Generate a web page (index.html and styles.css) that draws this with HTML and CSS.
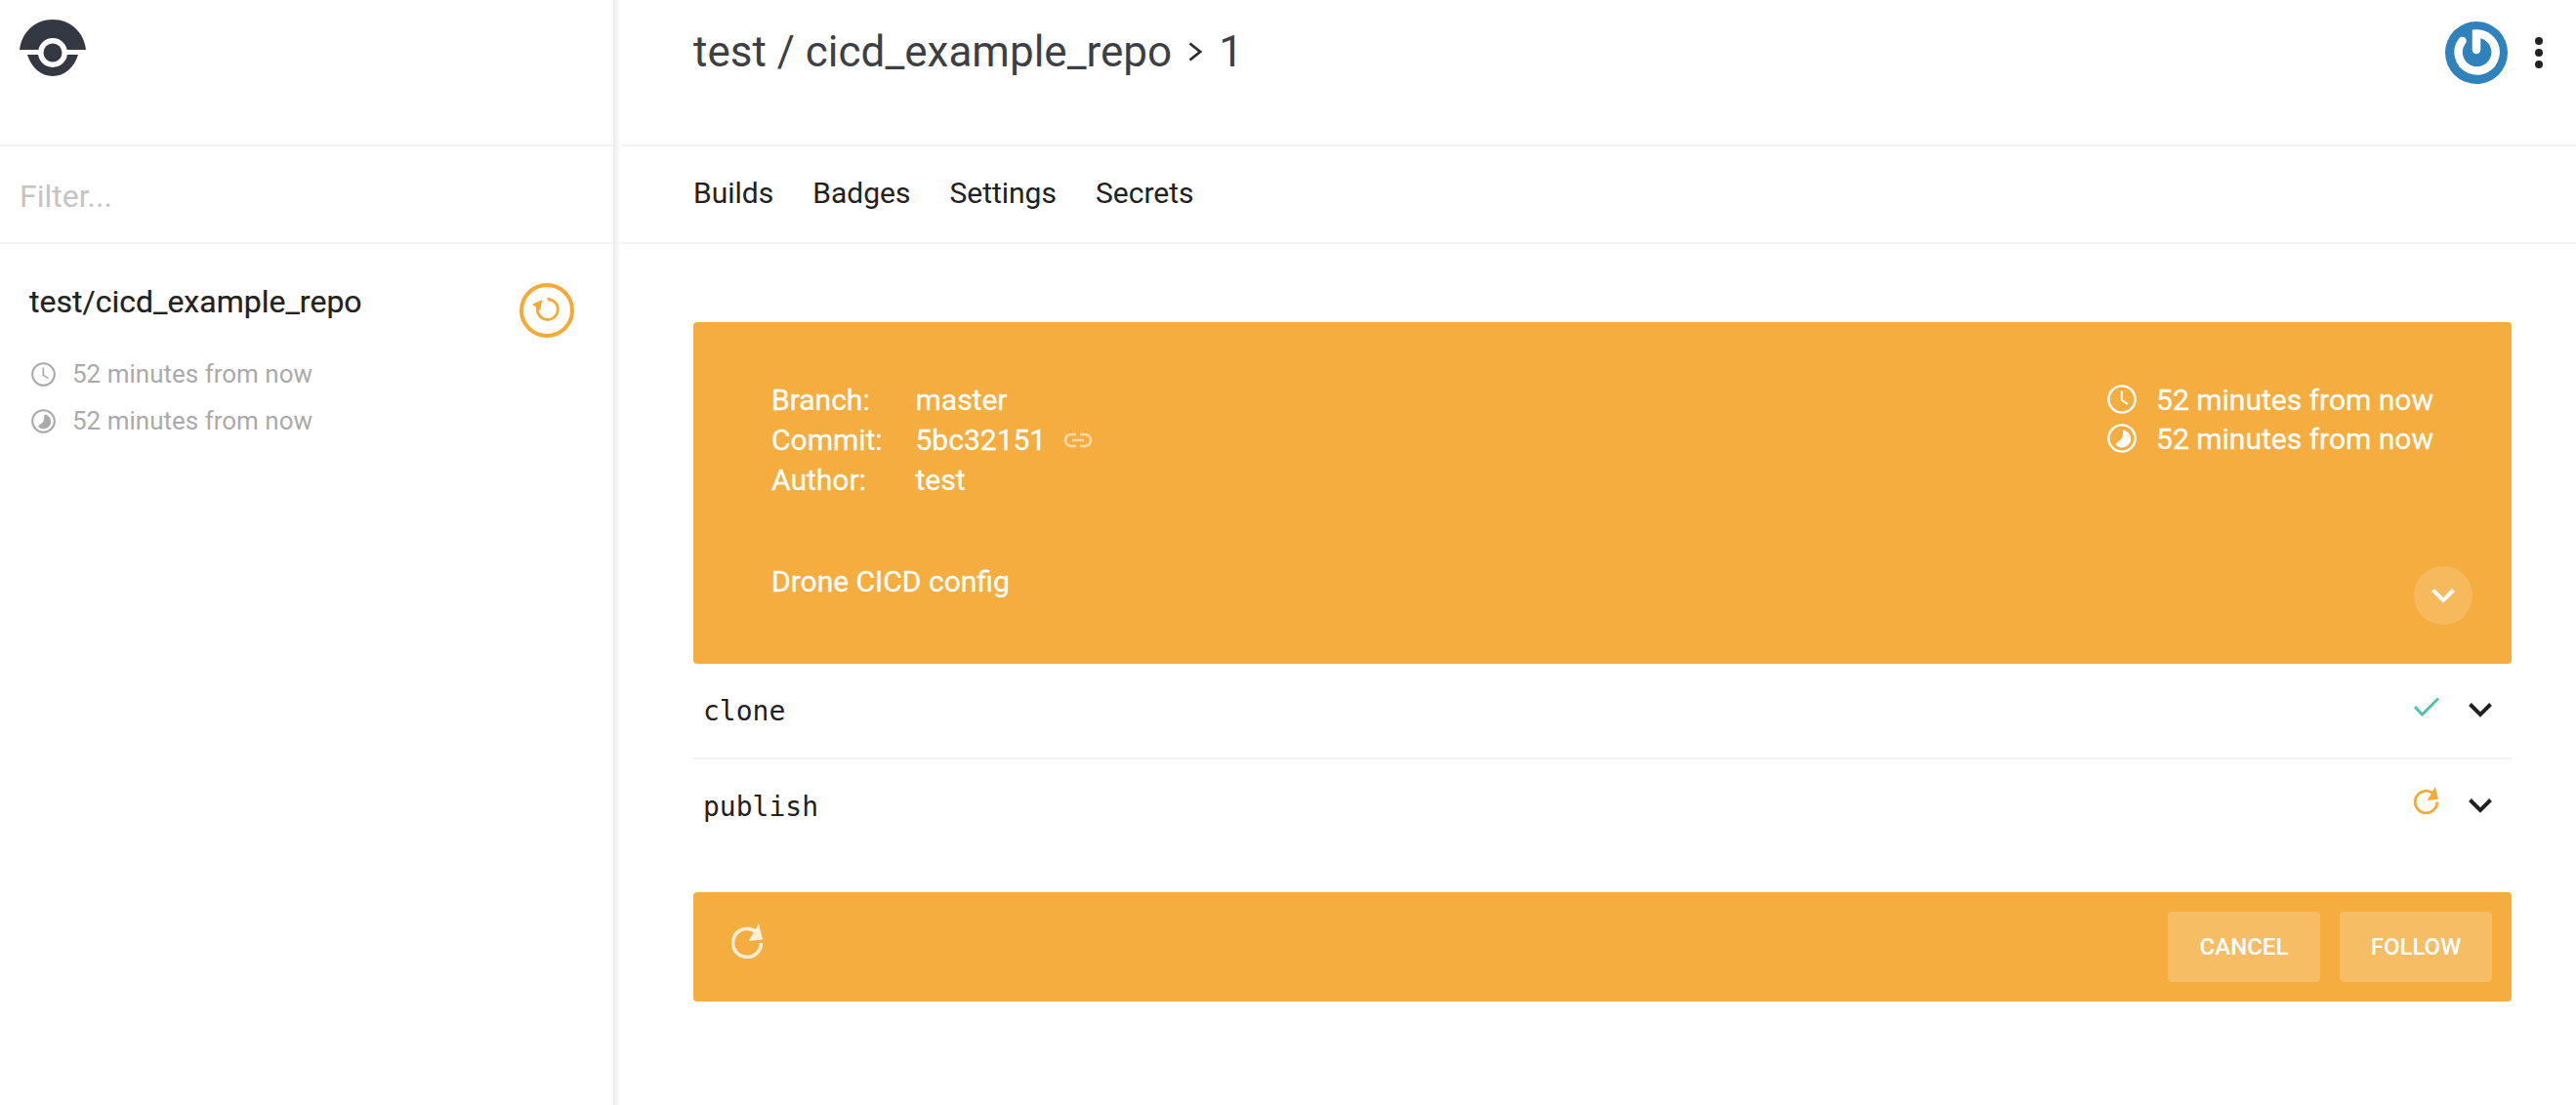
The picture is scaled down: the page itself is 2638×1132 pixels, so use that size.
FILE: index.html
```html
<!DOCTYPE html>
<html lang="en">
<head>
<meta charset="utf-8">
<title>test / cicd_example_repo</title>
<link rel="stylesheet" href="styles.css">
</head>
<body>
<svg class="defs" width="0" height="0" aria-hidden="true">
  <symbol id="refresh" viewBox="0 0 32 36">
    <path d="M30.5 20A14.5 14.5 0 1 1 25 8.6" fill="none" stroke="currentColor" stroke-width="3.6"/>
    <path d="M28 0L32 16.5L17.5 18Z" fill="currentColor"/>
  </symbol>
  <symbol id="clock" viewBox="0 0 30 30">
    <circle cx="15" cy="15" r="13.6" fill="none" stroke="currentColor" stroke-width="2.4"/>
    <path d="M14.8 6.5V16L21 20" fill="none" stroke="currentColor" stroke-width="2"/>
  </symbol>
  <symbol id="elapsed" viewBox="0 0 30 30">
    <circle cx="15" cy="15" r="13.6" fill="none" stroke="currentColor" stroke-width="2.4"/>
    <path d="M16 6.5A9 9 0 1 1 8.5 21.5L11 18.5Q16.5 17 16 6.5Z" fill="currentColor"/>
  </symbol>
  <symbol id="chevron" viewBox="0 0 24 16">
    <path d="M1.5 2.5L12 13L22.5 2.5" fill="none" stroke="currentColor" stroke-width="4"/>
  </symbol>
</svg>

<aside class="sidebar">
  <div class="brand">
    <svg class="logo" viewBox="0 0 68 58" aria-label="Drone">
      <path d="M0 31C2 13 16 0 34 0S66 13 68 31Z" fill="#343843"/>
      <path d="M8 36H60C56 49 46 58 34 58S12 49 8 36Z" fill="#343843"/>
      <circle cx="34" cy="34" r="15" fill="#fff"/>
      <circle cx="34" cy="34" r="9.5" fill="#343843"/>
    </svg>
  </div>
  <div class="filter">Filter...</div>
  <div class="repo">
    <div class="repo-text">
      <div class="repo-name">test/cicd_example_repo</div>
      <div class="repo-time"><svg class="repo-time-icon"><use href="#clock"/></svg><span>52 minutes from now</span></div>
      <div class="repo-time"><svg class="repo-time-icon"><use href="#elapsed"/></svg><span>52 minutes from now</span></div>
    </div>
    <svg class="repo-status" viewBox="0 0 56 56">
      <circle cx="28" cy="28" r="26" fill="none" stroke="#f6a935" stroke-width="4"/>
      <path d="M28.5 16.5A10.5 10.5 0 1 1 18.5 25" fill="none" stroke="#f6a935" stroke-width="2.8"/>
      <path d="M13 21.7L23 17.3L21.3 28.3Z" fill="#f6a935"/>
    </svg>
  </div>
</aside>

<main class="content">
  <header class="topbar">
    <h1 class="title">
      <span>test / cicd_example_repo</span>
      <svg class="title-sep" viewBox="0 0 14 20"><path d="M1.5 1.5L12 10L1.5 18.5" fill="none" stroke="#2a2d31" stroke-width="2.8"/></svg>
      <span>1</span>
    </h1>
    <div class="account">
      <svg class="avatar" viewBox="0 0 64 64">
        <circle cx="32" cy="32" r="32" fill="#3082bc"/>
        <path d="M17.5 20A19 19 0 1 0 32 12.5V29" fill="none" stroke="#fff" stroke-width="8.5" stroke-linecap="round"/>
      </svg>
      <div class="dots"><i></i><i></i><i></i></div>
    </div>
  </header>
  <nav class="tabs">
    <a>Builds</a><a>Badges</a><a>Settings</a><a>Secrets</a>
  </nav>
  <section class="page">
    <div class="card">
      <div class="card-top">
        <dl class="meta">
          <dt>Branch:</dt><dd>master</dd>
          <dt>Commit:</dt><dd>5bc32151<svg class="link" viewBox="0 0 30 16"><path d="M13 2H8a6 6 0 0 0 0 12H13M17 2H22a6 6 0 0 1 0 12H17M9 8H21" fill="none" stroke="#fff" stroke-width="2.5"/></svg></dd>
          <dt>Author:</dt><dd>test</dd>
        </dl>
        <div class="times">
          <div class="time"><svg class="time-icon"><use href="#clock"/></svg><span>52 minutes from now</span></div>
          <div class="time"><svg class="time-icon"><use href="#elapsed"/></svg><span>52 minutes from now</span></div>
        </div>
      </div>
      <div class="message">Drone CICD config</div>
      <div class="expand"><svg class="expand-icon"><use href="#chevron"/></svg></div>
    </div>
    <div class="steps">
      <div class="step">
        <span class="step-name">clone</span>
        <svg class="step-check" viewBox="0 0 26 20"><path d="M1 10L8.5 18L25 1.5" fill="none" stroke="#4fc3ab" stroke-width="3"/></svg>
        <svg class="step-chevron"><use href="#chevron"/></svg>
      </div>
      <div class="step">
        <span class="step-name">publish</span>
        <svg class="step-refresh"><use href="#refresh"/></svg>
        <svg class="step-chevron"><use href="#chevron"/></svg>
      </div>
    </div>
    <div class="actions">
      <svg class="actions-icon"><use href="#refresh"/></svg>
      <button class="btn">CANCEL</button>
      <button class="btn">FOLLOW</button>
    </div>
  </section>
</main>
</body>
</html>
```
FILE: styles.css
```css
* { box-sizing: border-box; }
html, body { margin: 0; height: 100%; }
body {
  display: flex;
  height: 1132px;
  overflow: hidden;
  background: #fff;
  font-family: Roboto, "Liberation Sans", sans-serif;
  color: #212121;
}
.defs { position: absolute; }

.sidebar {
  position: relative;
  flex: 0 0 628px;
  display: flex;
  flex-direction: column;
}
.sidebar::after {
  content: "";
  position: absolute;
  top: 0;
  bottom: 0;
  left: 100%;
  width: 8px;
  background: linear-gradient(to right, #ececec, #fff);
}
.brand {
  height: 150px;
  padding: 20px;
  border-bottom: 2px solid #f2f2f2;
}
.logo { display: block; width: 68px; height: 58px; }
.filter {
  height: 100px;
  padding: 4px 20px 0;
  display: flex;
  align-items: center;
  font-size: 32px;
  color: #c4c4c4;
  border-bottom: 2px solid #f2f2f2;
}
.repo {
  display: flex;
  justify-content: space-between;
  padding: 40px 40px 0 30px;
}
.repo-name {
  font-size: 32px;
  line-height: 38px;
  color: #212121;
  margin-bottom: 31px;
  -webkit-text-stroke: .2px;
}
.repo-time {
  display: flex;
  align-items: center;
  gap: 17px;
  height: 48px;
  padding-left: 2px;
  font-size: 26px;
  color: #aaa;
}
.repo-time-icon { width: 25px; height: 25px; }
.repo-status { width: 56px; height: 56px; }

.content { flex: 1; min-width: 0; display: flex; flex-direction: column; }
.topbar {
  height: 150px;
  padding: 0 34px 0 82px;
  display: flex;
  justify-content: space-between;
  align-items: flex-start;
  border-bottom: 2px solid #f2f2f2;
}
.title {
  margin: 27px 0 0;
  display: flex;
  align-items: center;
  gap: 17px;
  font-size: 44px;
  line-height: 52px;
  font-weight: 400;
  color: #3c4045;
}
.title-sep { width: 14px; height: 20px; }
.account { display: flex; align-items: center; gap: 28px; margin-top: 22px; }
.avatar { width: 64px; height: 64px; }
.dots { display: flex; flex-direction: column; gap: 4px; }
.dots i { width: 8px; height: 8px; border-radius: 50%; background: #212121; }

.tabs {
  height: 100px;
  padding: 0 0 4px 82px;
  display: flex;
  align-items: center;
  gap: 40px;
  font-size: 30px;
  color: #212121;
  border-bottom: 2px solid #f2f2f2;
}

.page { padding: 80px 66px 0 82px; }
.card {
  position: relative;
  height: 350px;
  padding: 59px 80px 0;
  background: #f5ad3f;
  border-radius: 4px;
  color: #fff;
  font-size: 30px;
  -webkit-text-stroke: .3px;
}
.card-top { display: flex; justify-content: space-between; }
.meta {
  margin: 0;
  display: grid;
  grid-template-columns: 147.5px auto;
  grid-auto-rows: 41px;
  line-height: 41px;
}
.meta dd { margin: 0; display: flex; align-items: center; gap: 18px; }
.link { width: 30px; height: 16px; opacity: .55; }
.times { display: flex; flex-direction: column; }
.time { display: flex; align-items: center; gap: 20px; height: 40px; }
.time-icon { width: 30px; height: 30px; }
.message { margin-top: 64px; line-height: 40px; }
.expand {
  position: absolute;
  right: 40px;
  bottom: 40px;
  width: 60px;
  height: 60px;
  border-radius: 50%;
  background: rgba(255, 255, 255, .16);
  display: flex;
  align-items: center;
  justify-content: center;
}
.expand-icon { width: 24px; height: 16px; color: #fff; }

.steps { display: flex; flex-direction: column; }
.step {
  height: 96px;
  padding: 0 20px 0 10px;
  display: flex;
  align-items: center;
}
.step + .step { height: 98px; border-top: 2px solid #f2f2f2; }
.step-name {
  flex: 1;
  font-family: "DejaVu Sans Mono", "Liberation Mono", monospace;
  font-size: 28px;
  color: #212121;
}
.step-check { width: 26px; height: 20px; margin: 0 30px 8px 0; }
.step-refresh { width: 25px; height: 28px; margin: 0 31px 12px 0; color: #f6a935; }
.step-chevron { width: 24px; height: 16px; margin-bottom: 3px; color: #212121; }

.actions {
  margin-top: 40px;
  height: 112px;
  padding: 0 20px 0 39px;
  display: flex;
  align-items: center;
  gap: 20px;
  background: #f5ad3f;
  border-radius: 4px;
}
.actions-icon { width: 32px; height: 36px; margin: 0 auto 12px 0; color: #fff; opacity: .8; }
.btn {
  width: 156px;
  height: 72px;
  border: 0;
  border-radius: 4px;
  background: rgba(255, 255, 255, .2);
  color: #fff;
  font: 500 24px Roboto, "Liberation Sans", sans-serif;
}
```
